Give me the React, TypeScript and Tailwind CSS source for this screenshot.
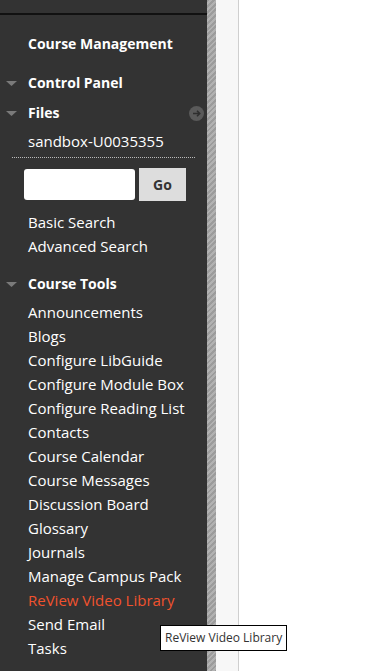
import React from "react";

const tools = [
  "Announcements",
  "Blogs",
  "Configure LibGuide",
  "Configure Module Box",
  "Configure Reading List",
  "Contacts",
  "Course Calendar",
  "Course Messages",
  "Discussion Board",
  "Glossary",
  "Journals",
  "Manage Campus Pack",
  "ReView Video Library",
  "Send Email",
  "Tasks",
];

function Caret() {
  return (
    <svg width="11" height="6" viewBox="0 0 11 6" className="absolute left-[6px] top-[10px]">
      <polygon points="0,0 11,0 5.5,5" fill="#7a7a7a" />
    </svg>
  );
}

function Section({ title, className = "" }: { title: string; className?: string }) {
  return (
    <div className={"relative leading-6 pl-7 text-[14px] font-bold text-white " + className}>
      <Caret />
      {title}
    </div>
  );
}

export default function App() {
  return (
    <div className="relative flex h-[671px] w-[375px] overflow-hidden bg-white font-['Open_Sans',sans-serif] text-[15px]">
      <aside className="w-[207px] shrink-0 bg-[#333333] text-white">
        <div className="h-[15px] border-b-2 border-[#111]" />

        <div className="mt-[17px] leading-6 pl-7 text-[14px] font-bold">Course Management</div>

        <Section title="Control Panel" className="mt-[15px]" />
        <div className="relative mt-[6px]">
          <Section title="Files" />
          <svg width="15" height="15" viewBox="0 0 15 15" className="absolute right-[3px] top-[5px]">
            <circle cx="7.5" cy="7.5" r="7.5" fill="#5a5a5a" />
            <path d="M4 7.5h6.5M8 4.8l2.7 2.7L8 10.2" stroke="#2e2e2e" strokeWidth="1.6" fill="none" />
          </svg>
        </div>
        <div className="mt-[4px] leading-6 pl-7">sandbox-U0035355</div>

        <div className="mx-3 mt-[4px] border-b border-dotted border-[#bbbbbb]" />

        <div className="mt-[10px] flex items-center gap-1 pl-6">
          <div className="h-[31px] w-[111px] rounded-[3px] bg-white" />
          <div className="flex h-[33px] w-[47px] items-center justify-center bg-[#dddddd] text-[14px] font-bold text-[#333]">
            Go
          </div>
        </div>

        <div className="mt-[9px] pl-7 leading-6">Basic Search</div>
        <div className="pl-7 leading-6">Advanced Search</div>

        <Section title="Course Tools" className="mt-[14px]" />
        <ul className="mt-[4px] pl-7">
          {tools.map((t) => (
            <li key={t} className={"leading-6 " + (t === "ReView Video Library" ? "text-[#f0522e]" : "text-white")}>
              {t}
            </li>
          ))}
        </ul>
      </aside>

      <div className="w-[9px] shrink-0 bg-[repeating-linear-gradient(135deg,#9c9c9c_0px,#9c9c9c_2px,#b2b2b2_2px,#b2b2b2_4px)]" />
      <div className="w-[23px] shrink-0 border-r border-[#cfcfcf] bg-[#f7f7f7]" />
      <div className="flex-1 bg-white" />

      <div className="absolute left-[160px] top-[625px] border border-black bg-white px-[4px] py-[3px] text-[12px] leading-[18px] text-[#333]">
        ReView Video Library
      </div>
    </div>
  );
}
